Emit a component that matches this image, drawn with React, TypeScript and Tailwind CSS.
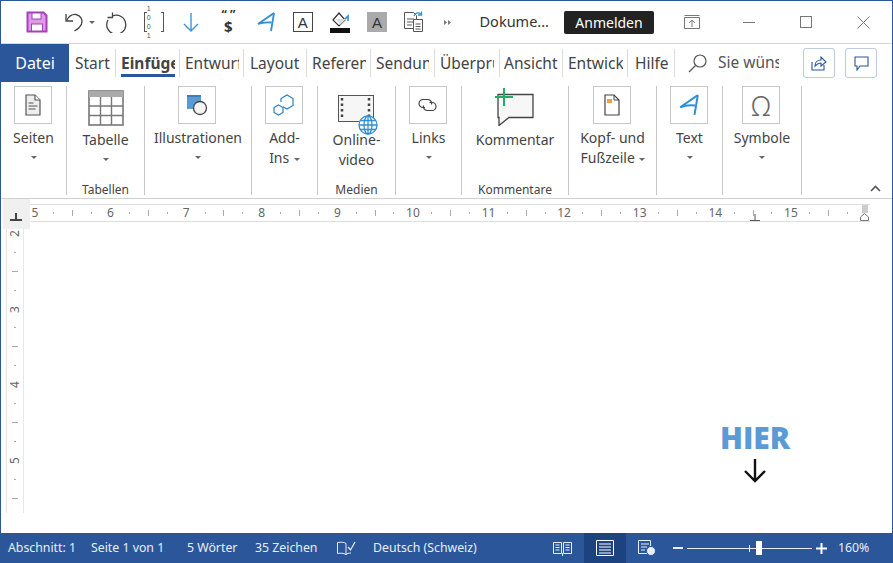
import React from "react";

const FONT = "font-['Noto_Sans','Open_Sans',sans-serif]";

const Caret = ({ className = "" }: { className?: string }) => (
  <span className={`inline-block w-0 h-0 border-x-[3px] border-x-transparent border-t-[3px] border-t-[#666] ${className}`} />
);

/* quick access toolbar icons */
const SaveIcon = () => (
  <svg width="22" height="22" viewBox="0 0 22 22">
    <path d="M1.500 1.500h16l3 3v16h-19z" fill="#dc9be4" stroke="#a83fbb" strokeWidth="2" />
    <rect x="6" y="2" width="9" height="6" fill="#fff" stroke="#a83fbb" />
    <rect x="5.500" y="13" width="11" height="7" fill="#fff" stroke="#a83fbb" />
  </svg>
);
const UndoIcon = () => (
  <svg width="22" height="22" viewBox="0 0 22 22" fill="none" stroke="#444" strokeWidth="1.300">
    <path d="M3 3v7h7" />
    <path d="M3.500 9.500C6 5 9 3 13 3.500c5 1 7 5.500 5.500 9.500-1 2.500-3.500 5-7 7" />
  </svg>
);
const RedoIcon = () => (
  <svg width="22" height="22" viewBox="0 0 22 22" fill="none" stroke="#444" strokeWidth="1.300">
    <path d="M6.500 1.500v5h-5" />
    <path d="M6.500 5A9.500 9.500 0 1 1 2 9" />
  </svg>
);
const BinaryIcon = () => (
  <div className="w-[20px] h-[20px] flex items-center justify-between">
    <span className="w-[3px] h-full border-y border-l border-[#555]" />
    <div className="flex flex-col items-center text-[7px] leading-[9px] tracking-[2px] text-[#555] font-['Liberation_Sans',sans-serif]">
      <span>1 0</span>
      <span>0 1</span>
    </div>
    <span className="w-[3px] h-full border-y border-r border-[#555]" />
  </div>
);
const DownArrow = () => (
  <svg width="18" height="20" viewBox="0 0 18 20" fill="none" stroke="#3f94d1" strokeWidth="1.400">
    <path d="M9 1v18M2 12l7 7 7-7" />
  </svg>
);
const WordArtA = ({ size = 20 }: { size?: number }) => (
  <svg width={size} height={size} viewBox="0 0 20 20" fill="none" stroke="#2f8fd6" strokeWidth="1.800">
    <path d="M18 1 2 12c4-1.500 9-2 13.500-1.500" />
    <path d="M18 1l-3 18" />
  </svg>
);
const BucketIcon = () => (
  <div className="flex flex-col items-center w-[20px]">
    <svg width="20" height="15" viewBox="0 0 20 15" fill="none">
      <path d="M9 1 3 8l6 6 6-6z" fill="#fff" stroke="#333" strokeWidth="1.200" />
      <path d="M6 7h7l3 0-6 6z" fill="#ddd" />
      <path d="M15 7l3-3v5" stroke="#2f8fd6" strokeWidth="1.600" />
    </svg>
    <span className="w-[20px] h-[5px] mt-[1px] bg-[#111]" />
  </div>
);
const DocLinkIcon = () => (
  <svg width="22" height="22" viewBox="0 0 22 22" fill="none" stroke="#555">
    <path d="M1.500 1.500h9l3 3v13h-12z" fill="#fff" />
    <path d="M4 8h7M4 11h7M4 14h5" />
    <path d="M10.500 8.500h9v12h-9z" fill="#fff" />
    <path d="M12.500 13h5M12.500 15.500h5M12.500 18h5" />
    <path d="M11 5c1-3 4-4 7-2" stroke="#2f8fd6" strokeWidth="1.300" />
    <path d="M18.500.500v3.500h-3.500" stroke="#2f8fd6" strokeWidth="1.300" />
  </svg>
);

/* window controls */
const DisplayIcon = () => (
  <svg width="16" height="14" viewBox="0 0 16 14" fill="none" stroke="#777">
    <path d="M.5 2.500h15v11H.5zM.5.500h15" />
    <path d="M8 12V5M5 8l3-3 3 3" />
  </svg>
);

/* ribbon icons */
const PageIcon = () => (
  <svg width="18" height="22" viewBox="0 0 18 22" fill="none" stroke="#555" strokeWidth="1.200">
    <path d="M2 1h9l5 5v15H2z" fill="#eee" />
    <path d="M11 1v5h5" fill="#fff" />
    <path d="M4.500 9h5M4.500 12h9M4.500 15h7" stroke="#888" strokeWidth="1.400" />
  </svg>
);
const TableIcon = () => (
  <svg width="36" height="36" viewBox="0 0 36 36">
    <rect x="1" y="1" width="34" height="34" fill="#fff" stroke="#777" strokeWidth="1.600" />
    <rect x="1" y="1" width="34" height="6" fill="#aaa" />
    <path d="M12.500 7v28M23.500 7v28M1 16h34M1 25.500h34" stroke="#777" strokeWidth="1.400" />
  </svg>
);
const ShapesIcon = () => (
  <svg width="22" height="22" viewBox="0 0 22 22">
    <path d="M1 1h14v14H1z" fill="#5b9bd5" />
    <path d="M1 1h14v2H1z" fill="#3f7fb8" />
    <circle cx="14" cy="14" r="6.500" fill="#f4f4f4" stroke="#444" strokeWidth="1.300" />
  </svg>
);
const AddInIcon = () => (
  <svg width="22" height="22" viewBox="0 0 22 22" fill="none" stroke="#2f7fc1" strokeWidth="1.200">
    <path d="M8 8V4.500L14 1l6 3.500v7L14 15l-4-2.300" />
    <path d="M5.500 11l4.500 2.500v5L5.500 21 1 18.500v-5z" />
  </svg>
);
const VideoIcon = () => (
  <div className="relative w-[40px] h-[42px] ml-[2px]">
    <svg width="36" height="27" viewBox="0 0 36 27" fill="none">
      <rect x=".5" y=".5" width="35" height="26" fill="#f6f6f6" stroke="#555" />
      <path d="M4 3v21M31 3v21" stroke="#444" strokeWidth="2.500" strokeDasharray="2.500 3" />
    </svg>
    <svg className="absolute right-0 bottom-[2px]" width="20" height="20" viewBox="0 0 20 20" fill="#fff" stroke="#2f8fd6" strokeWidth="1.300">
      <circle cx="10" cy="10" r="9" />
      <ellipse cx="10" cy="10" rx="4" ry="9" />
      <path d="M1 10h18M2.500 5.500h15M2.500 14.500h15M10 1v18" />
    </svg>
  </div>
);
const LinkIcon = () => (
  <svg width="21" height="14" viewBox="0 0 21 14" fill="none" stroke="#444" strokeWidth="1.200">
    <path d="M8 9.500H6a4 4 0 0 1 0-8h5a4 4 0 0 1 3.500 5" />
    <path d="M12.500 4.500h2.500a4 4 0 0 1 0 8h-5a4 4 0 0 1-3.500-5" />
  </svg>
);
const CommentIcon = () => (
  <svg width="40" height="38" viewBox="0 0 40 38" fill="none">
    <path d="M3 6.500h35v23H14l-10 8V29.500H3z" fill="#f7f7f7" stroke="#444" strokeWidth="1.300" />
    <path d="M9 0v18M0 9h18" stroke="#1fae68" strokeWidth="2" />
  </svg>
);
const HeaderIcon = () => (
  <svg width="16" height="22" viewBox="0 0 16 22" fill="none">
    <path d="M1 1h9l5 5v15H1z" fill="#fff" stroke="#444" strokeWidth="1.200" />
    <path d="M10 1v5h5" stroke="#444" />
    <rect x="3" y="5" width="5" height="4" fill="#f0a040" />
  </svg>
);

const RibbonGroup = ({ width, label, children }: { width: string; label?: string; children: React.ReactNode }) => (
  <div className={`${width} h-full shrink-0 border-r border-[#c8c8c8] flex flex-col items-center`}>
    {children}
    {label && <span className="mt-auto mb-[-3px] text-[12px] leading-[16px] text-[#444]">{label}</span>}
  </div>
);

const IconBox = ({ children }: { children: React.ReactNode }) => (
  <div className="w-[38px] h-[38px] mr-[2px] shrink-0 border border-[#c8c8c8] flex items-center justify-center">{children}</div>
);

const Lines = ({ children }: { children: React.ReactNode }) => (
  <div className="mt-[4px] text-[14px] leading-[20px] text-[#444] text-center whitespace-nowrap">{children}</div>
);

// the ribbon is too narrow for the full tab names, they get cut
const tabs = [
  { name: "Start", w: "w-[47px]", pad: "pl-[6px]" },
  { name: "Einfüge", w: "w-[64px]", pad: "pl-[5px] pr-[4px]", active: true },
  { name: "Entwurf", w: "w-[64px]", pad: "pl-[5px] pr-[4px]" },
  { name: "Layout", w: "w-[63px]", pad: "pl-[6px]" },
  { name: "Referen", w: "w-[64px]", pad: "pl-[5px] pr-[4px]" },
  { name: "Sendun", w: "w-[64px]", pad: "pl-[5px] pr-[5px]" },
  { name: "Überprü", w: "w-[65px]", pad: "pl-[5px] pr-[5px]" },
  { name: "Ansicht", w: "w-[63px]", pad: "pl-[4px]" },
  { name: "Entwick", w: "w-[65px]", pad: "pl-[5px] pr-[4px]" },
  { name: "Hilfe", w: "w-[47px]", pad: "pl-[7px]" },
];

const RulerCell = ({ n }: { n: number }) => (
  <div className="w-[75.6px] shrink-0 flex items-center text-[#666]">
    <span className="w-[18.9px] text-center text-[12px] leading-none">{n}</span>
    <span className="w-[18.9px] flex justify-center"><span className="w-px h-[2px] bg-[#aaa]" /></span>
    <span className="w-[18.9px] flex justify-center"><span className="w-px h-[6px] bg-[#aaa]" /></span>
    <span className="w-[18.9px] flex justify-center"><span className="w-px h-[2px] bg-[#aaa]" /></span>
  </div>
);

const VRulerCell = ({ n }: { n: number }) => (
  <div className="h-[75.6px] shrink-0 flex flex-col items-center text-[#666]">
    <span className="h-[18.9px] flex items-center justify-center text-[12px] leading-none -rotate-90">{n}</span>
    <span className="h-[18.9px] flex items-center"><span className="w-[2px] h-px bg-[#aaa]" /></span>
    <span className="h-[18.9px] flex items-center"><span className="w-[6px] h-px bg-[#aaa]" /></span>
    <span className="h-[18.9px] flex items-center"><span className="w-[2px] h-px bg-[#aaa]" /></span>
  </div>
);

export default function App() {
  return (
    <div className={`${FONT} relative w-[893px] h-[563px] flex flex-col overflow-hidden bg-white border-x border-t border-[#2b579a] text-[#444]`}>
      {/* title bar */}
      <div className="h-[43px] shrink-0 flex items-center border-b border-[#d8d8d8] pl-[17px]">
        <div className="w-[37.2px] flex justify-center"><SaveIcon /></div>
        <div className="w-[43px] flex items-center pl-[8px] gap-[4px]"><UndoIcon /><Caret /></div>
        <div className="w-[37.2px] flex justify-center"><RedoIcon /></div>
        <div className="w-[37.2px] flex justify-center"><BinaryIcon /></div>
        <div className="w-[37.2px] flex justify-center"><DownArrow /></div>
        <div className="w-[37.2px] flex flex-col items-center font-bold text-[#333] leading-none">
          <span className="text-[12px] leading-[8px] h-[8px]">“ ”</span>
          <span className="text-[15px] leading-[15px]">$</span>
        </div>
        <div className="w-[37.2px] flex justify-center"><WordArtA /></div>
        <div className="w-[37.2px] flex justify-center">
          <div className="w-[20px] h-[20px] border border-[#444] flex items-center justify-center text-[15px] leading-none text-[#333] font-['Liberation_Sans',sans-serif]">A</div>
        </div>
        <div className="w-[37.2px] flex justify-center"><BucketIcon /></div>
        <div className="w-[37.2px] flex justify-center">
          <div className="w-[20px] h-[20px] bg-[#aaa] flex items-center justify-center text-[15px] leading-none text-[#333] font-['Liberation_Sans',sans-serif]">A</div>
        </div>
        <div className="w-[37.2px] flex justify-center"><DocLinkIcon /></div>
        <div className="w-[30px] flex justify-center">
          <svg width="7" height="5" viewBox="0 0 7 5" fill="#777"><path d="M0 0l3 2.500L0 5zM4 0l3 2.500L4 5z" /></svg>
        </div>
        <div className="ml-auto flex items-center">
          <span className="text-[14.5px] text-[#333] mr-[15px]">Dokume...</span>
          <span className="w-[90px] h-[23px] rounded-[2px] bg-[#222] text-white text-[14px] flex items-center justify-center mr-[9px]">Anmelden</span>
          <div className="w-[57px] flex justify-center"><DisplayIcon /></div>
          <div className="w-[57px] flex justify-center"><span className="w-[12px] h-px bg-[#777]" /></div>
          <div className="w-[57px] flex justify-center"><span className="w-[12px] h-[12px] border border-[#777]" /></div>
          <div className="w-[58px] flex justify-center">
            <svg width="13" height="13" viewBox="0 0 13 13" stroke="#777"><path d="M.5.500l12 12M12.500.500l-12 12" /></svg>
          </div>
        </div>
      </div>

      {/* tabs */}
      <div className="h-[38px] shrink-0 flex items-center">
        <div className="w-[68px] h-full bg-[#2b579a] text-white text-[16px] flex items-center justify-center">Datei</div>
        {tabs.map((t) => (
          <div key={t.name} className={`${t.w} h-[28px] shrink-0 border-r border-[#dcdcdc] flex items-center ${t.pad}`}>
            <div className={`relative w-full h-[28px] overflow-hidden whitespace-nowrap text-[15.5px] leading-[28px] ${t.active ? "font-bold" : ""}`}>
              {t.name}
              {t.active && <span className="absolute left-0 right-0 bottom-0 h-[3px] bg-[#2b579a]" />}
            </div>
          </div>
        ))}
        <svg className="ml-[13px] shrink-0" width="19" height="19" viewBox="0 0 19 19" fill="none" stroke="#555" strokeWidth="1.200">
          <circle cx="12" cy="7" r="6" />
          <path d="M7.500 11.500 1 18" />
        </svg>
        <div className="ml-[11px] w-[61px] overflow-hidden whitespace-nowrap text-[15.5px] text-[#555]">Sie wüns</div>
        <div className="ml-[24px] w-[32px] h-[30px] rounded-[3px] border border-[#bccbe0] flex items-center justify-center">
          <svg width="16" height="16" viewBox="0 0 16 16" fill="none" stroke="#2b579a" strokeWidth="1.100">
            <path d="M1 7v8h12v-5" />
            <path d="M4 11c0-4 3-6 6-6V2l5 5-5 4V8c-3 0-4 1-6 3z" />
          </svg>
        </div>
        <div className="ml-[10px] w-[32px] h-[30px] rounded-[3px] border border-[#bccbe0] flex items-center justify-center">
          <svg width="15" height="15" viewBox="0 0 15 15" fill="none" stroke="#2b579a" strokeWidth="1.100">
            <path d="M1 1h13v9H6l-3 4v-4H1z" />
          </svg>
        </div>
      </div>

      {/* ribbon */}
      <div className="relative h-[117px] shrink-0 flex pt-[4px] pb-[3px] border-b border-[#d0d0d0]">
        <RibbonGroup width="w-[66px]">
          <IconBox><PageIcon /></IconBox>
          <Lines>Seiten</Lines>
          <Caret className="mt-[8px]" />
        </RibbonGroup>
        <RibbonGroup width="w-[78px]" label="Tabellen">
          <div className="mt-[4px]"><TableIcon /></div>
          <Lines>Tabelle</Lines>
          <Caret className="mt-[8px]" />
        </RibbonGroup>
        <RibbonGroup width="w-[107px]">
          <IconBox><ShapesIcon /></IconBox>
          <Lines>Illustrationen</Lines>
          <Caret className="mt-[8px]" />
        </RibbonGroup>
        <RibbonGroup width="w-[66px]">
          <IconBox><AddInIcon /></IconBox>
          <Lines>Add-<br />Ins <Caret className="mb-[2px] ml-[1px]" /></Lines>
        </RibbonGroup>
        <RibbonGroup width="w-[78px]" label="Medien">
          <div className="mt-[9px] mb-[-11px]"><VideoIcon /></div>
          <Lines>Online-<br />video</Lines>
        </RibbonGroup>
        <RibbonGroup width="w-[66px]">
          <IconBox><LinkIcon /></IconBox>
          <Lines>Links</Lines>
          <Caret className="mt-[8px]" />
        </RibbonGroup>
        <RibbonGroup width="w-[107px]" label="Kommentare">
          <div className="mt-[2px]"><CommentIcon /></div>
          <Lines>Kommentar</Lines>
        </RibbonGroup>
        <RibbonGroup width="w-[88px]">
          <IconBox><HeaderIcon /></IconBox>
          <Lines>Kopf- und<br />Fußzeile <Caret className="mb-[2px]" /></Lines>
        </RibbonGroup>
        <RibbonGroup width="w-[66px]">
          <IconBox><WordArtA size={22} /></IconBox>
          <Lines>Text</Lines>
          <Caret className="mt-[8px]" />
        </RibbonGroup>
        <RibbonGroup width="w-[79px]">
          <IconBox><span className="text-[27px] leading-none font-light text-[#666]">Ω</span></IconBox>
          <Lines>Symbole</Lines>
          <Caret className="mt-[8px]" />
        </RibbonGroup>
        <svg className="absolute right-[11px] bottom-[6px]" width="11" height="7" viewBox="0 0 11 7" fill="none" stroke="#555" strokeWidth="1.600">
          <path d="M1 6l4.500-4.500L10 6" />
        </svg>
      </div>

      {/* horizontal ruler */}
      <div className="h-[30px] shrink-0 flex">
        <div className="w-[27px] ml-[2px] h-full shrink-0 bg-[#f0f0f0] flex items-center justify-center">
          <svg className="mt-[6px] mr-[2px]" width="12" height="8" viewBox="0 0 12 8" fill="#444"><path d="M5 0h2v6h5v2H0V6h5z" /></svg>
        </div>
        <div className="relative mt-[5px] w-[840px] h-[18px] bg-white border-y border-[#dedede] flex overflow-hidden">
          <div className="ml-[-4.500px] flex">
            {[5, 6, 7, 8, 9, 10, 11, 12, 13, 14, 15].map((n) => <RulerCell key={n} n={n} />)}
          </div>
          <svg className="absolute left-[720px] top-[9px]" width="10" height="8" viewBox="0 0 10 8" fill="#555"><path d="M4.500 0h1v6H10v2H0V6h4.500z" /></svg>
          <span className="absolute right-[2px] top-0 w-[6px] h-[8px] bg-[#ccc]" />
          <svg className="absolute right-[1px] top-[8px]" width="9" height="8" viewBox="0 0 9 8" fill="#fff" stroke="#777"><path d="M.5 7.500V4l4-3.500 4 3.500v3.500z" /></svg>
        </div>
      </div>

      {/* page */}
      <div className="relative flex-1 flex min-h-0">
        <div className="ml-[5px] w-[18px] h-[284px] bg-white border-x border-[#e6e6e6] flex flex-col overflow-hidden">
          <div className="mt-[-5px] flex flex-col">
            {[2, 3, 4, 5].map((n) => <VRulerCell key={n} n={n} />)}
          </div>
        </div>
        <div className="absolute left-[719px] top-[194px] w-[70px] flex flex-col items-center">
          <span className="font-['Open_Sans',sans-serif] font-extrabold text-[30px] leading-[30px] text-[#5b9bd5]">HIER</span>
          <svg className="mt-[6px]" width="22" height="24" viewBox="0 0 22 24" fill="none" stroke="#111" strokeWidth="2.400">
            <path d="M11 0v22M1 12l10 10 10-10" />
          </svg>
        </div>
      </div>

      {/* status bar */}
      <div className="h-[30px] shrink-0 -mx-px bg-[#2b579a] text-[#e8eef7] text-[12.3px] flex items-center pl-[8px]">
        <span className="w-[83px]">Abschnitt: 1</span>
        <span className="w-[96px]">Seite 1 von 1</span>
        <span className="w-[68px]">5 Wörter</span>
        <span className="w-[82px]">35 Zeichen</span>
        <svg className="shrink-0" width="19" height="15" viewBox="0 0 19 15" fill="none" stroke="#e8eef7">
          <path d="M9 2.500C7 1 4 1 .5 1.500v11c3-.5 6-.5 8.500 1 1-1 3-1.500 5-1.500M9 2.500V14" />
          <path d="M11 6l2.500 3L18 1" strokeWidth="1.200" />
        </svg>
        <span className="ml-[17px] w-[180px]">Deutsch (Schweiz)</span>
        <svg className="shrink-0" width="19" height="15" viewBox="0 0 19 15" fill="none" stroke="#e8eef7">
          <path d="M.5 1.500h8v11h-8zM10.500 1.500h8v11h-8zM2.500 4h4M2.500 6.500h4M2.500 9h4M12.500 4h4M12.500 6.500h4M12.500 9h4M9.500 12v3" />
        </svg>
        <div className="ml-[12px] w-[42px] h-full bg-[#1c4380] flex items-center justify-center">
          <svg width="18" height="16" viewBox="0 0 18 16" fill="none" stroke="#fff">
            <path d="M.5.500h17v15H.5zM3 4h12M3 7h12M3 10h12M3 13h12" />
          </svg>
        </div>
        <svg className="ml-[12px] shrink-0" width="18" height="16" viewBox="0 0 18 16" fill="none" stroke="#e8eef7">
          <path d="M.5.500h12v13H.5zM3 4h8M3 7h6M3 10h4" />
          <circle cx="13" cy="11" r="4.500" fill="#e8eef7" stroke="#2b579a" />
        </svg>
        <span className="ml-[17px] w-[10px] h-[2px] bg-[#e8eef7]" />
        <div className="relative ml-[4px] w-[125px] h-[1px] bg-[#e8eef7] flex items-center">
          <span className="absolute left-[62px] w-px h-[7px] bg-[#e8eef7]" />
          <span className="absolute left-[69px] w-[6px] h-[14px] bg-white" />
        </div>
        <svg className="ml-[4px] shrink-0" width="11" height="11" viewBox="0 0 11 11" fill="#fff"><path d="M4.500 0h2v4.500H11v2H6.500V11h-2V6.500H0v-2h4.500z" /></svg>
        <span className="ml-[11px]">160%</span>
      </div>
    </div>
  );
}
